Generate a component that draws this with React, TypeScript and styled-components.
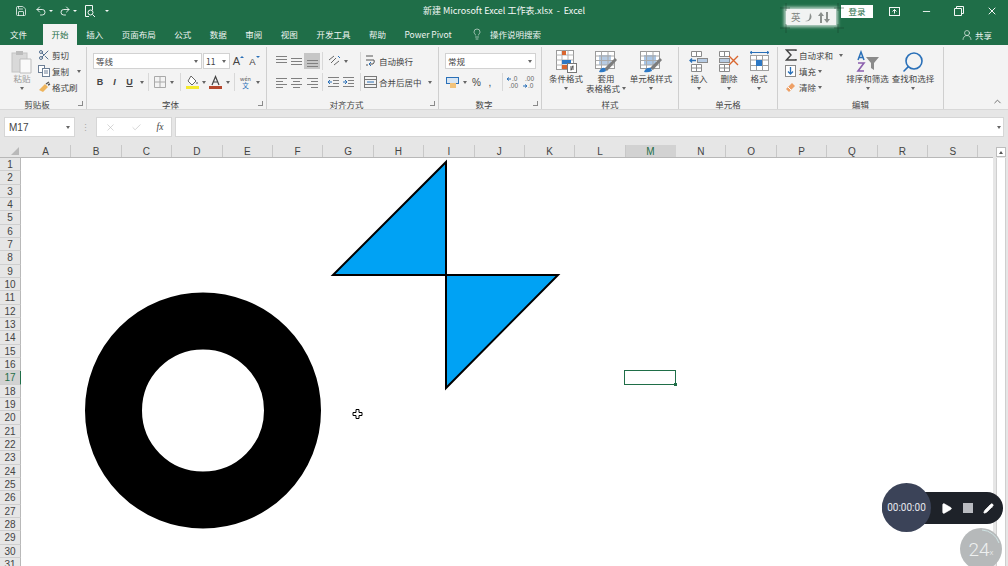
import { createGlobalStyle, styled } from "styled-components";
import { Check, ChevronUp, Lightbulb, Minus, Pencil, Play, Save, Scissors, Search, Undo2, Redo2, UserRound, X } from "lucide-react";

const GREEN = "#1f6e48";
const CJK = `"Noto Sans CJK SC", "Liberation Sans", sans-serif`;

const Global = createGlobalStyle`
  html, body { margin: 0; padding: 0; height: 566px; overflow: hidden; background: #e6e6e6; }
  body { font-family: ${CJK}; }
`;

const Window = styled.div`
  position: relative;
  width: 1008px;
  height: 566px;
  overflow: hidden;
  display: flex;
  flex-direction: column;
  color: #444;
`;

/* title bar */
const TitleBar = styled.div`
  height: 22px;
  flex: none;
  background: ${GREEN};
  display: grid;
  grid-template-columns: 1fr auto 1fr;
  align-items: center;
  color: #f4f8f6;
`;
const Qat = styled.div`
  display: flex;
  align-items: center;
  padding-left: 15px;
  height: 100%;
`;
const QatBtn = styled.span<{ $w: number }>`
  width: ${(p) => p.$w}px;
  display: flex;
  align-items: center;
  gap: 2px;
`;
const Title = styled.div`
  font-size: 9px;
  white-space: pre;
  padding-bottom: 2px;
`;
const WinControls = styled.div`
  display: flex;
  align-items: center;
  justify-content: flex-end;
  height: 100%;
`;
const Login = styled.span`
  width: 32px;
  height: 13px;
  margin-right: 5px;
  background: #fff;
  color: ${GREEN};
  font-size: 8.5px;
  line-height: 13px;
  text-align: center;
`;
const WinBtn = styled.span`
  width: 32.5px;
  display: flex;
  justify-content: center;
`;
const WhiteCaret = styled.span`
  width: 0;
  height: 0;
  border-left: 2px solid transparent;
  border-right: 2px solid transparent;
  border-top: 2px solid #f4f8f6;
`;
const Ime = styled.div`
  position: absolute;
  left: 786px;
  top: 9px;
  width: 50px;
  height: 16px;
  background: #f1f3f2;
  box-shadow: 0 0 3px 2px rgba(255, 255, 255, 0.7);
  display: flex;
  align-items: center;
  justify-content: space-between;
  padding: 0 6px 0 5px;
  box-sizing: border-box;
  color: #7d8380;
  font-size: 9.5px;
  > svg:last-child {
    position: absolute;
    left: -6px;
    top: -6px;
  }
`;

/* tabs */
const TabBar = styled.div`
  height: 23px;
  flex: none;
  background: ${GREEN};
  display: flex;
  align-items: flex-end;
  color: #eef4f1;
  font-size: 8.5px;
`;
const Tab = styled.span<{ $active?: boolean }>`
  height: 21px;
  padding: 0 9.25px 1px;
  display: flex;
  align-items: center;
  box-sizing: border-box;
  white-space: nowrap;
  background: ${(p) => (p.$active ? "#f3f3f3" : "transparent")};
  color: ${(p) => (p.$active ? GREEN : "inherit")};
`;
const FirstTab = styled(Tab)`
  padding: 0 16px 1px 10px;
`;
const ActiveTab = styled(Tab)`
  padding: 0 8.5px 1px 8.5px;
`;
const Hint = styled.span`
  height: 21px;
  display: flex;
  align-items: center;
  gap: 7px;
  margin-left: 10px;
  padding-bottom: 1px;
  box-sizing: border-box;
`;
const ShareBox = styled.span`
  height: 21px;
  margin-left: auto;
  padding-right: 16px;
  display: flex;
  align-items: center;
  gap: 2px;
`;

/* ribbon */
const Ribbon = styled.div`
  height: 65px;
  flex: none;
  box-sizing: border-box;
  background: #f3f3f3;
  border-bottom: 1px solid #d8d8d8;
  display: flex;
  position: relative;
  font-size: 8.5px;
  white-space: nowrap;
`;
const Group = styled.div<{ $w: number }>`
  position: relative;
  width: ${(p) => p.$w}px;
  flex: none;
  height: 62px;
  margin-top: 2px;
  box-sizing: border-box;
  border-right: 1px solid #cfcfcf;
  display: flex;
  flex-direction: column;
`;
const GroupBody = styled.div<{ $pl?: number; $pt?: number }>`
  height: 50px;
  flex: none;
  box-sizing: border-box;
  padding-left: ${(p) => p.$pl ?? 0}px;
  padding-top: ${(p) => p.$pt ?? 0}px;
  display: flex;
`;
const GroupLabel = styled.div<{ $launcher?: boolean }>`
  text-align: center;
  line-height: 12px;
  margin-top: 1px;
  padding-right: ${(p) => (p.$launcher ? 12 : 0)}px;
`;
const Launcher = styled.span`
  position: absolute;
  right: 3px;
  bottom: 3px;
  width: 5px;
  height: 5px;
  border-right: 1px solid #8a8a8a;
  border-bottom: 1px solid #8a8a8a;
  box-sizing: border-box;
`;
const BigButton = styled.div<{ $w: number; $muted?: boolean }>`
  width: ${(p) => p.$w}px;
  flex: none;
  padding-top: 3px;
  display: flex;
  flex-direction: column;
  align-items: center;
  line-height: 10px;
  color: ${(p) => (p.$muted ? "#9a9a9a" : "inherit")};
`;
const BigIcon = styled.div`
  height: 24px;
  display: flex;
  align-items: center;
  justify-content: center;
  margin-bottom: -1px;
`;
const CaretLine = styled.div`
  height: 10px;
  display: flex;
  align-items: center;
  justify-content: center;
  gap: 2px;
`;
const Caret = styled.span<{ $ml?: number }>`
  display: inline-block;
  flex: none;
  width: 0;
  height: 0;
  margin-left: ${(p) => p.$ml ?? 0}px;
  border-left: 2.5px solid transparent;
  border-right: 2.5px solid transparent;
  border-top: 3px solid #666;
`;
const SmallCol = styled.div<{ $w: number; $ml?: number }>`
  width: ${(p) => p.$w}px;
  flex: none;
  margin-left: ${(p) => p.$ml ?? 0}px;
  display: flex;
  flex-direction: column;
`;
const SmallItem = styled.div`
  height: 16px;
  display: flex;
  align-items: center;
`;
const SmallIcon = styled.span<{ $w?: number }>`
  width: ${(p) => p.$w ?? 14}px;
  flex: none;
  display: flex;
  align-items: center;
  justify-content: flex-start;
`;
const Stack = styled.div`
  display: flex;
  flex-direction: column;
  gap: 5px;
`;
const Row = styled.div`
  height: 16px;
  display: flex;
  align-items: center;
`;
const Select = styled.div<{ $w: number; $ml?: number }>`
  width: ${(p) => p.$w}px;
  height: 16px;
  margin-left: ${(p) => p.$ml ?? 0}px;
  box-sizing: border-box;
  background: #fff;
  border: 1px solid #d2d2d2;
  padding: 0 3px 0 2px;
  display: flex;
  align-items: center;
  justify-content: space-between;
  flex: none;
`;
const Slot = styled.span<{ $w: number; $on?: boolean }>`
  position: relative;
  width: ${(p) => p.$w}px;
  height: 16px;
  flex: none;
  display: flex;
  align-items: center;
  justify-content: center;
  gap: 2px;
  background: ${(p) => (p.$on ? "#c6c6c6" : "transparent")};
`;
const Glyph = styled.span<{ $i?: boolean; $u?: boolean }>`
  font-family: "Liberation Sans", sans-serif;
  font-size: 9px;
  font-weight: 700;
  font-style: ${(p) => (p.$i ? "italic" : "normal")};
  text-decoration: ${(p) => (p.$u ? "underline" : "none")};
`;
const SizeA = styled.span<{ $large?: boolean }>`
  font-family: "Liberation Sans", sans-serif;
  font-size: ${(p) => (p.$large ? 11 : 9.5)}px;
  margin-right: 3px;
`;
const SizeMark = styled.span<{ $down?: boolean; $color: string }>`
  position: absolute;
  right: 2px;
  top: 3px;
  width: 0;
  height: 0;
  border-left: 2px solid transparent;
  border-right: 2px solid transparent;
  border-top: ${(p) => (p.$down ? `2px solid ${p.$color}` : "0")};
  border-bottom: ${(p) => (p.$down ? "0" : `2px solid ${p.$color}`)};
`;
const PlainSign = styled.span<{ $size: number }>`
  font-family: "Liberation Sans", sans-serif;
  font-size: ${(p) => p.$size}px;
`;
const Phonetic = styled.span`
  display: flex;
  flex-direction: column;
  align-items: center;
  font-size: 6.5px;
  line-height: 6.5px;
  color: #2a70b8;
  > i {
    font-style: normal;
    color: #555;
    font-size: 5.5px;
    line-height: 6px;
  }
`;
const VSep = styled.span<{ $ml?: number; $mr?: number }>`
  width: 1px;
  height: 18px;
  flex: none;
  background: #d8d8d8;
  margin-left: ${(p) => p.$ml ?? 0}px;
  margin-right: ${(p) => p.$mr ?? 0}px;
`;
const Collapse = styled.span`
  position: absolute;
  right: 5px;
  bottom: 0;
  color: #666;
`;

/* formula bar */
const FormulaBar = styled.div`
  height: 35px;
  flex: none;
  box-sizing: border-box;
  padding: 7px 4px 8px 4px;
  display: flex;
  align-items: stretch;
  background: #e6e6e6;
`;
const NameBox = styled.div`
  width: 71px;
  box-sizing: border-box;
  background: #fff;
  border: 1px solid #d6d6d6;
  padding: 0 4px;
  display: flex;
  align-items: center;
  justify-content: space-between;
  font: 10px "Liberation Sans", sans-serif;
`;
const Dots = styled.span`
  width: 21px;
  display: flex;
  align-items: center;
  justify-content: center;
  color: #a8a8a8;
  font-size: 9px;
`;
const FxBox = styled.div`
  width: 76px;
  box-sizing: border-box;
  background: #fff;
  border: 1px solid #d6d6d6;
  display: flex;
  align-items: center;
  justify-content: space-around;
  margin-right: 3px;
  color: #b5b5b5;
`;
const Fx = styled.span`
  font: italic 9.5px "Liberation Serif", serif;
  color: #444;
`;
const FormulaInput = styled.div`
  flex: 1;
  box-sizing: border-box;
  background: #fff;
  border: 1px solid #d6d6d6;
  display: flex;
  align-items: center;
  justify-content: flex-end;
  padding-right: 2px;
`;

/* sheet */
const SheetWrap = styled.div`
  flex: 1;
  min-height: 0;
  display: flex;
  background: #e6e6e6;
`;
const Sheet = styled.div`
  width: 993px;
  flex: none;
  display: grid;
  grid-template-columns: 21px 1fr;
  grid-template-rows: 13px 1fr;
  font-family: "Liberation Sans", sans-serif;
  font-size: 10px;
  color: #444;
`;
const Corner = styled.div`
  position: relative;
  border-bottom: 1px solid #b8b8b8;
  box-sizing: border-box;
  &::after {
    content: "";
    position: absolute;
    right: 2px;
    bottom: 2px;
    border-left: 8px solid transparent;
    border-bottom: 8px solid #b9b9b9;
  }
`;
const ColHead = styled.div`
  display: flex;
  overflow: hidden;
  border-bottom: 1px solid #b8b8b8;
  box-sizing: border-box;
  height: 13px;
`;
const ColCell = styled.div<{ $on?: boolean }>`
  width: 50.4px;
  flex: none;
  box-sizing: border-box;
  text-align: center;
  line-height: 14px;
  height: ${(p) => (p.$on ? 13 : 12)}px;
  border-right: 1px solid ${(p) => (p.$on ? "#d2d2d2" : "#c8c8c8")};
  background: ${(p) => (p.$on ? "#d2d2d2" : "transparent")};
  color: ${(p) => (p.$on ? GREEN : "inherit")};
  border-bottom: ${(p) => (p.$on ? `1px solid ${GREEN}` : "0")};
`;
const RowHead = styled.div`
  overflow: hidden;
`;
const RowCell = styled.div<{ $on?: boolean }>`
  height: 13.33px;
  line-height: 14.5px;
  box-sizing: border-box;
  text-align: center;
  border-right: 1px solid ${(p) => (p.$on ? GREEN : "#b8b8b8")};
  border-bottom: 1px solid #cfcfcf;
  background: ${(p) => (p.$on ? "#d2d2d2" : "transparent")};
  color: ${(p) => (p.$on ? GREEN : "inherit")};
`;
const Canvas = styled.div`
  position: relative;
  background: #fff;
  overflow: hidden;
`;
const Shapes = styled.svg`
  position: absolute;
  left: 0;
  top: 0;
`;
const Selected = styled.div`
  position: absolute;
  left: 603px;
  top: 212px;
  width: 52px;
  height: 15px;
  box-sizing: border-box;
  border: 1.5px solid ${GREEN};
  &::after {
    content: "";
    position: absolute;
    right: -2px;
    bottom: -2px;
    width: 3px;
    height: 3px;
    background: ${GREEN};
  }
`;
const Scroll = styled.div`
  flex: 1;
  display: flex;
  flex-direction: column;
  padding: 2px 2px 0 3px;
  gap: 1px;
`;
const ScrollUp = styled.div`
  height: 10px;
  flex: none;
  background: #fff;
  border: 1px solid #bdbdbd;
  box-sizing: border-box;
  display: flex;
  align-items: center;
  justify-content: center;
  &::after {
    content: "";
    border-left: 2.5px solid transparent;
    border-right: 2.5px solid transparent;
    border-bottom: 3px solid #555;
  }
`;
const Track = styled.div`
  flex: 1;
  background: #fff;
  border-left: 1px solid #cfcfcf;
  border-right: 1px solid #cfcfcf;
`;

/* recorder overlay */
const Recorder = styled.div`
  position: absolute;
  left: 882px;
  top: 492px;
  width: 121px;
  height: 32px;
  border-radius: 16px;
  background: #1e2229;
  display: flex;
  align-items: center;
  justify-content: flex-end;
  gap: 10px;
  padding-right: 9px;
  box-sizing: border-box;
  color: #fff;
`;
const Timer = styled.div`
  position: absolute;
  left: 0;
  top: -9px;
  width: 49px;
  height: 49px;
  border-radius: 50%;
  background: #3b4358;
  color: #e6e8ee;
  display: flex;
  align-items: center;
  justify-content: center;
  font: 10px Roboto, sans-serif;
`;
const StopBox = styled.span`
  width: 10px;
  height: 10px;
  background: #b9bbc0;
`;
const Speed = styled.div`
  position: absolute;
  left: 960px;
  top: 528px;
  width: 42px;
  height: 42px;
  border-radius: 50%;
  background: #b6b9ba;
  color: #eef0f0;
  font: 300 19px Roboto, sans-serif;
  display: flex;
  align-items: center;
  justify-content: center;
  small { font-size: 8px; margin-top: 7px; }
  svg { position: absolute; inset: 0; }
`;

const st = { fill: "none", stroke: "#808080", strokeWidth: 1 };

function Lines({ kind }: { kind: "l" | "c" | "r" | "t" | "m" | "b" }) {
  const ys = kind === "t" ? [2, 5, 8] : kind === "m" ? [4, 7, 10] : kind === "b" ? [6, 9, 12] : [3, 6, 9, 12];
  const short = kind === "l" ? [1, 8] : kind === "c" ? [3, 10] : kind === "r" ? [5, 12] : [1, 12];
  return (
    <svg width="13" height="14" viewBox="0 0 13 14" {...st}>
      {ys.map((y, i) => (
        <path key={y} d={i % 2 === 0 ? `M1 ${y}.5H12` : `M${short[0]} ${y}.5H${short[1]}`} />
      ))}
    </svg>
  );
}

function Indent({ out }: { out?: boolean }) {
  return (
    <svg width="13" height="13" viewBox="0 0 13 13" fill="none">
      <path d="M1 1.5H12M6 4.5H12M6 7.5H12M1 10.5H12" stroke="#808080" />
      <path d={out ? "M1 6H5M3 4L1 6L3 8" : "M1 6H5M3 4L5 6L3 8"} stroke="#2a70b8" />
    </svg>
  );
}

function PasteIcon() {
  return (
    <svg width="22" height="24" viewBox="0 0 22 24">
      <rect x="1" y="3" width="15" height="19" fill="#d9d9d9" stroke="#c4c4c4" />
      <rect x="5" y="1" width="7" height="4" fill="#bcbcbc" />
      <path d="M9 9H20V23H9Z" fill="#fafafa" stroke="#bdbdbd" />
    </svg>
  );
}

function CopyIcon() {
  return (
    <svg width="12" height="12" viewBox="0 0 12 12" fill="#fff" stroke="#6d7f96">
      <rect x="0.5" y="0.5" width="6" height="7" />
      <rect x="4.5" y="3.5" width="7" height="8" />
      <path d="M6 6H10M6 8H10" />
    </svg>
  );
}

function BrushIcon() {
  return (
    <svg width="13" height="12" viewBox="0 0 13 12" fill="none">
      <path d="M1 9L7 3L10 6L5 11Z" fill="#eeb45c" />
      <path d="M8 3L11 1M10 4L12 3" stroke="#555" strokeWidth="1.4" />
    </svg>
  );
}

function BorderIcon() {
  return (
    <svg width="12" height="12" viewBox="0 0 12 12" fill="none" stroke="#a9a9a9">
      <path d="M0.5 0.5H11.5V11.5H0.5ZM6 0.5V11.5M0.5 6H11.5" />
    </svg>
  );
}

function FillIcon() {
  return (
    <svg width="13" height="14" viewBox="0 0 13 14">
      <path d="M5 1L10 6L6 10L2 6Z" fill="#fff" stroke="#666" />
      <circle cx="11" cy="8" r="1" fill="#888" />
      <rect x="0" y="11" width="13" height="3" fill="#f5ea2e" />
    </svg>
  );
}

function FontColorIcon() {
  return (
    <svg width="13" height="14" viewBox="0 0 13 14" fill="none">
      <path d="M3 10L6.5 1.5L10 10M4.3 7H8.7" stroke="#444" strokeWidth="1.2" />
      <rect x="0" y="11" width="13" height="3" fill="#b5472d" />
    </svg>
  );
}

function WrapIcon() {
  return (
    <svg width="11" height="14" viewBox="0 0 11 14" fill="none" stroke="#555">
      <path d="M1 2H8M1 6H9Q10 8 8 10H5M1 11H3" />
      <path d="M6 8L4 10L6 12" stroke="#2a70b8" />
    </svg>
  );
}

function MergeIcon() {
  return (
    <svg width="13" height="12" viewBox="0 0 13 12" fill="none" stroke="#777">
      <rect x="0.5" y="0.5" width="12" height="11" />
      <path d="M0.5 3.5H12.5M0.5 8.5H12.5" />
      <path d="M3 6H10" stroke="#2a70b8" />
    </svg>
  );
}

function OrientIcon() {
  return (
    <svg width="14" height="14" viewBox="0 0 14 14" fill="none" stroke="#666">
      <path d="M2 6L7 2M4 9L9 4M7 11L12 7" />
      <path d="M11 2L13 4" stroke="#2a70b8" />
    </svg>
  );
}

function GridBase({ fill }: { fill: string }) {
  return (
    <>
      <rect x="1.5" y="1.5" width="19" height="17" fill="#fff" stroke="#9a9a9a" />
      <rect x="5" y="5" width="12" height="10" fill={fill} />
      <path d="M1.5 6H20.5M1.5 10.5H20.5M1.5 15H20.5M7.5 1.5V18.5M14 1.5V18.5" stroke="#a9a9a9" fill="none" />
    </>
  );
}

function CondIcon() {
  return (
    <svg width="22" height="24" viewBox="0 0 22 24">
      <rect x="1.5" y="0.5" width="17" height="19" fill="#fff" stroke="#9a9a9a" />
      <path d="M1.5 5H18.5M1.5 10H18.5M1.5 15H18.5M7 0.5V19.5M13 0.5V19.5" stroke="#b5b5b5" fill="none" />
      <rect x="7" y="1" width="4" height="4" fill="#d9662f" />
      <rect x="7" y="10" width="9" height="4" fill="#2d78c4" />
      <rect x="7" y="15" width="5" height="4" fill="#d9662f" />
      <rect x="12.5" y="13.5" width="9" height="9" fill="#fff" stroke="#777" />
      <path d="M15 17H19M15 19H19M18 15.5L16 20.5" stroke="#555" fill="none" />
    </svg>
  );
}

function TableIcon() {
  return (
    <svg width="24" height="24" viewBox="0 0 24 24">
      <GridBase fill="#b6cbe3" />
      <path d="M10 19L21 8L23 10L13 21Z" fill="#7d7d7d" />
      <path d="M5 22Q7 17 11 18L12 21Q9 23 5 22Z" fill="#2d78c4" />
    </svg>
  );
}

function CellStyleIcon() {
  return (
    <svg width="24" height="24" viewBox="0 0 24 24">
      <GridBase fill="#a9c6e6" />
      <path d="M11 18L21 8L23 10L14 20Z" fill="#7d7d7d" />
      <path d="M5 22Q7 17 12 18L13 21Q9 23 5 22Z" fill="#2d78c4" />
    </svg>
  );
}

function InsertIcon() {
  return (
    <svg width="20" height="22" viewBox="0 0 20 22" fill="#fff" stroke="#8a8a8a">
      <path d="M2.5 0.5H12.5V5.5H2.5ZM7.5 0.5V5.5" />
      <path d="M2.5 13.5H12.5V20.5H2.5ZM7.5 13.5V20.5M2.5 17H12.5" />
      <rect x="8.5" y="7.5" width="10" height="4" fill="#b6cbe3" stroke="#8a8a8a" />
      <path d="M7 9.5H1M3 7.5L1 9.5L3 11.5" fill="none" stroke="#2a70b8" strokeWidth="1.3" />
    </svg>
  );
}

function DeleteIcon() {
  return (
    <svg width="22" height="22" viewBox="0 0 22 22" fill="#fff" stroke="#8a8a8a">
      <path d="M1.5 0.5H11.5V5.5H1.5ZM6.5 0.5V5.5" />
      <path d="M1.5 13.5H11.5V20.5H1.5ZM6.5 13.5V20.5M1.5 17H11.5" />
      <rect x="1.5" y="7.5" width="10" height="4" fill="#b6cbe3" />
      <path d="M11 5L20 14M20 5L11 14" fill="none" stroke="#d9662f" strokeWidth="1.4" />
    </svg>
  );
}

function FormatIcon() {
  return (
    <svg width="21" height="22" viewBox="0 0 21 22" fill="none" stroke="#a0a0a0">
      <path d="M1 1.5H20M1 1.5L3 0M1 1.5L3 3M20 1.5L18 0M20 1.5L18 3" stroke="#2a70b8" />
      <rect x="1.5" y="4.5" width="18" height="15" fill="#fff" />
      <path d="M1.5 9H19.5M1.5 14.5H19.5M7.5 4.5V19.5M13.5 4.5V19.5" />
      <rect x="7" y="9" width="6" height="6" fill="#2d78c4" stroke="none" />
    </svg>
  );
}

function SortIcon() {
  return (
    <svg width="24" height="24" viewBox="0 0 24 24" fill="none">
      <path d="M2 10L5 2L8 10M3 7.5H7" stroke="#2a70b8" strokeWidth="1.5" />
      <path d="M2 13H8L2 21H8" stroke="#8c5fae" strokeWidth="1.6" />
      <path d="M10 7H23L18 13V20L15 18V13Z" fill="#8a8a8a" />
    </svg>
  );
}

function SigmaIcon() {
  return (
    <svg width="12" height="12" viewBox="0 0 12 12" fill="none" stroke="#444" strokeWidth="1.4">
      <path d="M11 2V1H1.5L6 6L1.5 11H11V10" />
    </svg>
  );
}

function DownFillIcon() {
  return (
    <svg width="11" height="12" viewBox="0 0 11 12" fill="#fff" stroke="#8a8a8a">
      <rect x="0.5" y="0.5" width="10" height="11" />
      <path d="M5.5 2V9M3 6.5L5.5 9L8 6.5" fill="none" stroke="#2a70b8" strokeWidth="1.3" />
    </svg>
  );
}

function EraserIcon() {
  return (
    <svg width="11" height="11" viewBox="0 0 11 11">
      <path d="M1 7L7 1L10 4L4 10Z" fill="#eea066" />
      <path d="M3 5L6 8" stroke="#fff" />
    </svg>
  );
}

function NumFormatIcon() {
  return (
    <svg width="13" height="13" viewBox="0 0 13 13">
      <rect x="0.5" y="1.5" width="12" height="6" fill="#d7e5f3" stroke="#2a70b8" />
      <rect x="4" y="7" width="6" height="5" fill="#f1c27a" />
    </svg>
  );
}

function Decimal({ more }: { more?: boolean }) {
  return (
    <svg width="15" height="14" viewBox="0 0 15 14" fill="none" fontFamily="Liberation Sans, sans-serif" fontSize="6.5">
      <text x={more ? 6 : 3} y="6" fill="#666" stroke="none">{more ? ".0" : ".00"}</text>
      <text x={more ? 3 : 6} y="13" fill="#666" stroke="none">{more ? ".00" : ".0"}</text>
      <path d={more ? "M1 4H5M3 2.5L1 4L3 5.5" : "M1 11H5M3 9.5L5 11L3 12.5"} stroke="#2a70b8" />
    </svg>
  );
}

function PreviewIcon() {
  return (
    <svg width="12" height="13" viewBox="0 0 12 13" fill="none" stroke="#f4f8f6">
      <path d="M8.5 5V0.5H1.5V11.5H5" />
      <circle cx="6.5" cy="7.5" r="2.5" />
      <path d="M8.5 9.5L11 12" />
    </svg>
  );
}

function RestoreIcon() {
  return (
    <svg width="10" height="10" viewBox="0 0 10 10" fill="none" stroke="#f4f8f6">
      <path d="M0.5 2.5H7.5V9.5H0.5ZM2.5 2.5V0.5H9.5V7.5H7.5" />
    </svg>
  );
}

function RibbonModeIcon() {
  return (
    <svg width="11" height="9" viewBox="0 0 11 9" fill="none" stroke="#f4f8f6">
      <rect x="0.5" y="0.5" width="10" height="8" />
      <path d="M3.5 4.5L5.5 2.5L7.5 4.5M5.5 2.5V6.5" />
    </svg>
  );
}

function MoonIcon() {
  return (
    <svg width="10" height="11" viewBox="0 0 10 11">
      <path d="M6 1Q9 5 6 8Q4 10 1 9Q5 9 5.5 5.5Q5.8 3 6 1Z" fill="#8a8f8c" />
    </svg>
  );
}

function ImeArrows() {
  return (
    <svg width="12" height="11" viewBox="0 0 12 11" fill="#8a8f8c">
      <path d="M3 0L6 4H4V11H2V4H0ZM9 11L6 7H8V0H10V7H12Z" />
    </svg>
  );
}

function ImeFrame() {
  return (
    <svg width="64" height="30" viewBox="0 0 64 30" fill="none" stroke="#173f2b" strokeWidth="0.7" strokeOpacity="0.7">
      <path d="M6 0V30M58 0V30M0 6H64M0 23H64" strokeDasharray="2 1" opacity="0" />
      <path d="M6 0V8M0 5H10M58 0V8M54 5H64M6 21V30M0 25H10M58 21V30M54 25H64" />
    </svg>
  );
}

function Cross() {
  return (
    <path
      d="M332 254.5H335V251.5H338V254.5H341V257.5H338V260.5H335V257.5H332Z"
      fill="#fff"
      stroke="#000"
      strokeWidth="1"
    />
  );
}

const columns = "ABCDEFGHIJKLMNOPQRS".split("");
const rows = Array.from({ length: 31 }, (_, i) => i + 1);

export default function App() {
  return (
    <Window>
      <Global />
      <TitleBar>
        <Qat>
          <QatBtn $w={20}><Save size={12} strokeWidth={1.6} /></QatBtn>
          <QatBtn $w={24}><Undo2 size={12} strokeWidth={1.8} /><WhiteCaret /></QatBtn>
          <QatBtn $w={25}><Redo2 size={12} strokeWidth={1.8} /><WhiteCaret /></QatBtn>
          <QatBtn $w={21}><PreviewIcon /></QatBtn>
          <QatBtn $w={10}><WhiteCaret /></QatBtn>
        </Qat>
        <Title>新建 Microsoft Excel 工作表.xlsx  -  Excel</Title>
        <WinControls>
          <Login>登录</Login>
          <WinBtn><RibbonModeIcon /></WinBtn>
          <WinBtn><Minus size={11} /></WinBtn>
          <WinBtn><RestoreIcon /></WinBtn>
          <WinBtn><X size={12} /></WinBtn>
        </WinControls>
      </TitleBar>
      <TabBar>
        <FirstTab>文件</FirstTab>
        <ActiveTab $active>开始</ActiveTab>
        <Tab>插入</Tab>
        <Tab>页面布局</Tab>
        <Tab>公式</Tab>
        <Tab>数据</Tab>
        <Tab>审阅</Tab>
        <Tab>视图</Tab>
        <Tab>开发工具</Tab>
        <Tab>帮助</Tab>
        <Tab>Power Pivot</Tab>
        <Hint><Lightbulb size={12} strokeWidth={1.2} />操作说明搜索</Hint>
        <ShareBox><UserRound size={12} strokeWidth={1.3} />共享</ShareBox>
      </TabBar>
      <Ribbon>
        <Group $w={87}>
          <GroupBody $pl={10}>
            <BigButton $w={24} $muted>
              <BigIcon><PasteIcon /></BigIcon>
              <span>粘贴</span>
              <CaretLine><Caret /></CaretLine>
            </BigButton>
            <SmallCol $w={50} $ml={4}>
              <SmallItem><SmallIcon><Scissors size={12} color="#54708f" /></SmallIcon>剪切</SmallItem>
              <SmallItem><SmallIcon><CopyIcon /></SmallIcon>复制<Caret $ml={8} /></SmallItem>
              <SmallItem><SmallIcon><BrushIcon /></SmallIcon>格式刷</SmallItem>
            </SmallCol>
          </GroupBody>
          <GroupLabel $launcher>剪贴板</GroupLabel>
          <Launcher />
        </Group>
        <Group $w={180}>
          <GroupBody $pl={6} $pt={6}>
            <Stack>
              <Row>
                <Select $w={109}>等线<Caret /></Select>
                <Select $w={27} $ml={1}>11<Caret /></Select>
                <Slot $w={16}><SizeA $large>A</SizeA><SizeMark $color="#2a70b8" /></Slot>
                <Slot $w={16}><SizeA>A</SizeA><SizeMark $down $color="#2a70b8" /></Slot>
              </Row>
              <Row>
                <Slot $w={14}><Glyph>B</Glyph></Slot>
                <Slot $w={15}><Glyph $i>I</Glyph></Slot>
                <Slot $w={15}><Glyph $u>U</Glyph></Slot>
                <Slot $w={10}><Caret /></Slot>
                <VSep $ml={1} $mr={4} />
                <Slot $w={14}><BorderIcon /></Slot>
                <Slot $w={10}><Caret /></Slot>
                <VSep $ml={3} $mr={4} />
                <Slot $w={14}><FillIcon /></Slot>
                <Slot $w={9}><Caret /></Slot>
                <Slot $w={15}><FontColorIcon /></Slot>
                <Slot $w={9}><Caret /></Slot>
                <VSep $ml={2} $mr={3} />
                <Slot $w={15}><Phonetic><i>wén</i>文</Phonetic></Slot>
                <Slot $w={10}><Caret /></Slot>
              </Row>
            </Stack>
          </GroupBody>
          <GroupLabel $launcher>字体</GroupLabel>
          <Launcher />
        </Group>
        <Group $w={172}>
          <GroupBody $pl={7} $pt={6}>
            <Stack>
              <Row>
                <Slot $w={15}><Lines kind="t" /></Slot>
                <Slot $w={15}><Lines kind="m" /></Slot>
                <Slot $w={16} $on><Lines kind="b" /></Slot>
                <VSep $ml={2} $mr={3} />
                <Slot $w={15}><OrientIcon /></Slot>
                <Slot $w={9}><Caret /></Slot>
                <VSep $ml={10} $mr={4} />
                <SmallIcon $w={14}><WrapIcon /></SmallIcon>自动换行
              </Row>
              <Row>
                <Slot $w={15}><Lines kind="l" /></Slot>
                <Slot $w={15}><Lines kind="c" /></Slot>
                <Slot $w={16}><Lines kind="r" /></Slot>
                <VSep $ml={2} $mr={3} />
                <Slot $w={15}><Indent out /></Slot>
                <Slot $w={15}><Indent /></Slot>
                <VSep $ml={4} $mr={3} />
                <SmallIcon $w={15}><MergeIcon /></SmallIcon>合并后居中<Caret $ml={6} />
              </Row>
            </Stack>
          </GroupBody>
          <GroupLabel $launcher>对齐方式</GroupLabel>
          <Launcher />
        </Group>
        <Group $w={103}>
          <GroupBody $pl={6} $pt={6}>
            <Stack>
              <Row><Select $w={91}>常规<Caret /></Select></Row>
              <Row>
                <Slot $w={15}><NumFormatIcon /></Slot>
                <Slot $w={9}><Caret /></Slot>
                <Slot $w={15}><PlainSign $size={10}>%</PlainSign></Slot>
                <Slot $w={12}><PlainSign $size={10}>,</PlainSign></Slot>
                <VSep $ml={6} $mr={2} />
                <Slot $w={16}><Decimal more /></Slot>
                <Slot $w={17}><Decimal /></Slot>
              </Row>
            </Stack>
          </GroupBody>
          <GroupLabel $launcher>数字</GroupLabel>
          <Launcher />
        </Group>
        <Group $w={137}>
          <GroupBody $pl={3}>
            <BigButton $w={42}>
              <BigIcon><CondIcon /></BigIcon>
              <span>条件格式</span>
              <CaretLine><Caret /></CaretLine>
            </BigButton>
            <BigButton $w={38}>
              <BigIcon><TableIcon /></BigIcon>
              <span>套用</span>
              <CaretLine>表格格式<Caret /></CaretLine>
            </BigButton>
            <BigButton $w={52}>
              <BigIcon><CellStyleIcon /></BigIcon>
              <span>单元格样式</span>
              <CaretLine><Caret /></CaretLine>
            </BigButton>
          </GroupBody>
          <GroupLabel>样式</GroupLabel>
        </Group>
        <Group $w={99}>
          <GroupBody $pl={5}>
            <BigButton $w={30}>
              <BigIcon><InsertIcon /></BigIcon>
              <span>插入</span>
              <CaretLine><Caret /></CaretLine>
            </BigButton>
            <BigButton $w={30}>
              <BigIcon><DeleteIcon /></BigIcon>
              <span>删除</span>
              <CaretLine><Caret /></CaretLine>
            </BigButton>
            <BigButton $w={30}>
              <BigIcon><FormatIcon /></BigIcon>
              <span>格式</span>
              <CaretLine><Caret /></CaretLine>
            </BigButton>
          </GroupBody>
          <GroupLabel>单元格</GroupLabel>
        </Group>
        <Group $w={166}>
          <GroupBody $pl={7}>
            <SmallCol $w={60}>
              <SmallItem><SmallIcon><SigmaIcon /></SmallIcon>自动求和<Caret $ml={6} /></SmallItem>
              <SmallItem><SmallIcon><DownFillIcon /></SmallIcon>填充<Caret $ml={2} /></SmallItem>
              <SmallItem><SmallIcon><EraserIcon /></SmallIcon>清除<Caret $ml={2} /></SmallItem>
            </SmallCol>
            <BigButton $w={45}>
              <BigIcon><SortIcon /></BigIcon>
              <span>排序和筛选</span>
              <CaretLine><Caret /></CaretLine>
            </BigButton>
            <BigButton $w={46}>
              <BigIcon><Search size={24} color="#2a70b8" strokeWidth={1.6} style={{ transform: "scaleX(-1)" }} /></BigIcon>
              <span>查找和选择</span>
              <CaretLine><Caret /></CaretLine>
            </BigButton>
          </GroupBody>
          <GroupLabel>编辑</GroupLabel>
        </Group>
        <Collapse><ChevronUp size={11} /></Collapse>
      </Ribbon>
      <FormulaBar>
        <NameBox>M17<Caret /></NameBox>
        <Dots>⋮</Dots>
        <FxBox>
          <X size={11} strokeWidth={1.2} />
          <Check size={11} strokeWidth={1.2} />
          <Fx>fx</Fx>
        </FxBox>
        <FormulaInput><Caret /></FormulaInput>
      </FormulaBar>
      <SheetWrap>
        <Sheet>
          <Corner />
          <ColHead>
            {columns.map((c) => (
              <ColCell key={c} $on={c === "M"}>{c}</ColCell>
            ))}
          </ColHead>
          <RowHead>
            {rows.map((r) => (
              <RowCell key={r} $on={r === 17}>{r}</RowCell>
            ))}
          </RowHead>
          <Canvas>
            <Shapes width="972" height="408" viewBox="0 0 972 408">
              <circle cx="182" cy="252.5" r="89.5" fill="none" stroke="#000" strokeWidth="57" />
              <path d="M425 4V117H312Z" fill="#00a2f4" stroke="#000" strokeWidth="2" />
              <path d="M425 117H537L425 230Z" fill="#00a2f4" stroke="#000" strokeWidth="2" />
              <Cross />
            </Shapes>
            <Selected />
          </Canvas>
        </Sheet>
        <Scroll>
          <ScrollUp />
          <Track />
        </Scroll>
      </SheetWrap>
      <Ime>
        <span>英</span>
        <MoonIcon />
        <ImeArrows />
        <ImeFrame />
      </Ime>
      <Recorder>
        <Timer>00:00:00</Timer>
        <Play size={13} fill="#fff" strokeWidth={1} />
        <StopBox />
        <Pencil size={11} fill="#fff" />
      </Recorder>
      <Speed>
        24<small>x</small>
        <svg width="42" height="42" viewBox="0 0 42 42" fill="none">
          <path d="M22 2A19 19 0 0 1 39 15" stroke="#cfe3e3" strokeWidth="1" />
        </svg>
      </Speed>
    </Window>
  );
}
